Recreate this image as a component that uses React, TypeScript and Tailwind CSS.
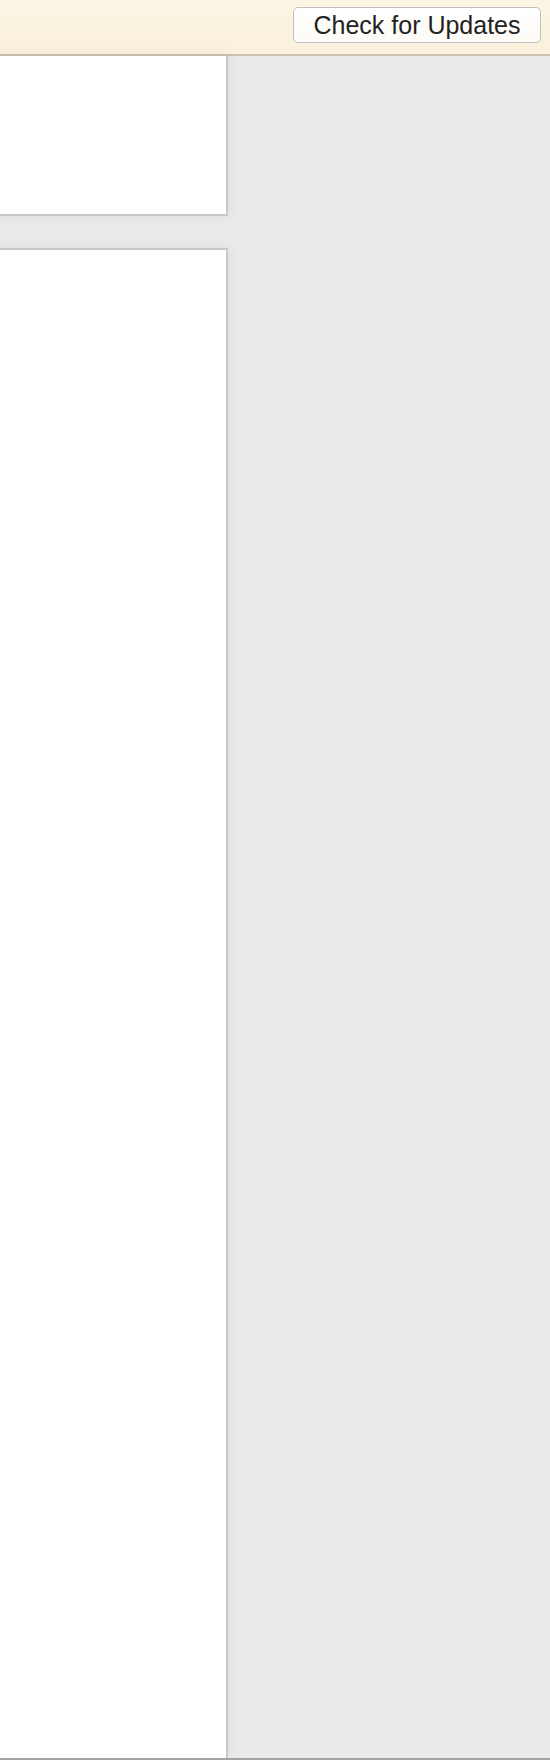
export default function App() {
  return (
    <div
      className="flex h-[1760px] w-[550px] flex-col overflow-hidden bg-[#eaeaea]"
      style={{ fontFamily: '"Liberation Sans", Arial, sans-serif' }}
    >
      <header className="flex h-[56px] shrink-0 items-start justify-end border-b-2 border-[#cbc3b0] bg-[linear-gradient(to_bottom,#fcf5e4,#f9f1dc)] pr-[9px] pt-[7px]">
        <button className="flex h-[36px] w-[248px] items-center justify-center rounded-[5px] border border-[#bfbfbf] bg-[linear-gradient(to_bottom,#ffffff,#fdfbf6)] pt-[1px] text-[25px] leading-none text-[#222]">
          Check for Updates
        </button>
      </header>

      <main className="flex min-h-0 flex-1 flex-col">
        <section className="h-[160px] w-[228px] shrink-0 border-r-2 border-b-2 border-[#c8c8c8] bg-white shadow-[0_0_14px_rgba(0,0,0,0.07)]" />
        <section className="mt-[32px] w-[228px] flex-1 border-t-2 border-r-2 border-[#c8c8c8] bg-white shadow-[0_0_14px_rgba(0,0,0,0.07)]" />
      </main>

      <footer className="h-[2px] shrink-0 bg-[#a3a3a3]" />
    </div>
  );
}
